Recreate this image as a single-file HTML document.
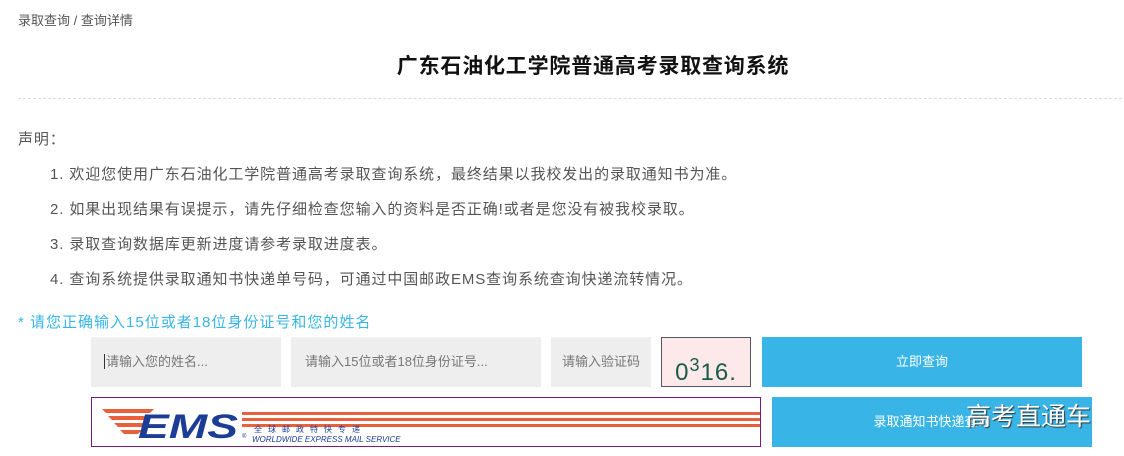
<!DOCTYPE html>
<html><head><meta charset="utf-8"><style>
body{margin:0;width:1124px;height:456px;background:#fff;font-family:"Liberation Sans","Noto Sans CJK SC",sans-serif;position:relative;overflow:hidden}
.a{position:absolute;white-space:nowrap}
.p{font-size:15px;color:#555;letter-spacing:0.9px}
.in{position:absolute;background:#eee;top:337px;height:50px;color:#777;font-size:13px;line-height:50px}
.btn{position:absolute;background:#38b5e6;color:#fff;font-size:13px;text-align:center}
</style></head><body>
<div class="a" style="left:18px;top:10px;font-size:13px;color:#555">录取查询 / 查询详情</div>
<div class="a" style="left:0;width:1186px;text-align:center;top:50px;font-size:21px;font-weight:bold;color:#111;letter-spacing:0.8px">广东石油化工学院普通高考录取查询系统</div>
<div class="a" style="left:18px;top:98px;width:1104px;border-top:1px dashed #ddd"></div>
<div class="a p" style="left:18px;top:128px">声明：</div>
<div class="a p" style="left:50px;top:163px">1. 欢迎您使用广东石油化工学院普通高考录取查询系统，最终结果以我校发出的录取通知书为准。</div>
<div class="a p" style="left:50px;top:198px">2. 如果出现结果有误提示，请先仔细检查您输入的资料是否正确!或者是您没有被我校录取。</div>
<div class="a p" style="left:50px;top:233px">3. 录取查询数据库更新进度请参考录取进度表。</div>
<div class="a p" style="left:50px;top:268px">4. 查询系统提供录取通知书快递单号码，可通过中国邮政EMS查询系统查询快递流转情况。</div>
<div class="a" style="left:18px;top:311px;font-size:15px;color:#38b5e6;letter-spacing:1px">* 请您正确输入15位或者18位身份证号和您的姓名</div>
<div class="in" style="left:91px;width:190px"><span style="border-left:1px solid #333;margin-left:13px;padding-left:1px">请输入您的姓名...</span></div>
<div class="in" style="left:291px;width:250px"><span style="margin-left:14px">请输入15位或者18位身份证号...</span></div>
<div class="in" style="left:551px;width:100px;text-align:center">请输入验证码</div>
<div class="a" style="left:661px;top:337px;width:88px;height:48px;background:#fde9e9;border:1px solid #556;font-family:'Liberation Sans',sans-serif;color:#1a5a4a;font-size:24px;line-height:54px;letter-spacing:1px;text-align:center">0<sup style="font-size:18px">3</sup>16.</div>
<div class="btn" style="left:762px;top:337px;width:320px;height:50px;line-height:50px">立即查询</div>
<div class="a" style="left:91px;top:397px;width:668px;height:48px;border:1px solid #7a1a7a;background:#fff">
<svg width="668" height="48">
<g fill="#e8603c"><polygon points="10,11 62,11 58,15 14,15"/><polygon points="16,18 58,18 54,22 20,22"/><polygon points="22,25 54,25 50,29 26,29"/><polygon points="28,32 50,32 46,36 32,36"/>
<rect x="150" y="14" width="518" height="3"/><rect x="150" y="20" width="518" height="3"/><rect x="150" y="26" width="518" height="3"/></g>
<text x="46" y="40" font-family="Liberation Sans" font-weight="bold" font-style="italic" font-size="34" fill="#1c3d96" textLength="100" lengthAdjust="spacingAndGlyphs">EMS</text>
<text x="150" y="40" font-size="6" fill="#1c3d96">®</text>
<text x="162" y="34" font-size="8" fill="#1c3d96" letter-spacing="6">全球邮政特快专递</text>
<text x="160" y="44" font-size="8" font-style="italic" fill="#1c3d96">WORLDWIDE EXPRESS MAIL SERVICE</text>
</svg></div>
<div class="btn" style="left:772px;top:397px;width:320px;height:50px;line-height:50px">录取通知书快递查询</div>
<div class="a" style="left:966px;top:397px;font-size:25px;color:#fff;text-shadow:1px 1px 1px #333">高考直通车</div>
</body></html>
